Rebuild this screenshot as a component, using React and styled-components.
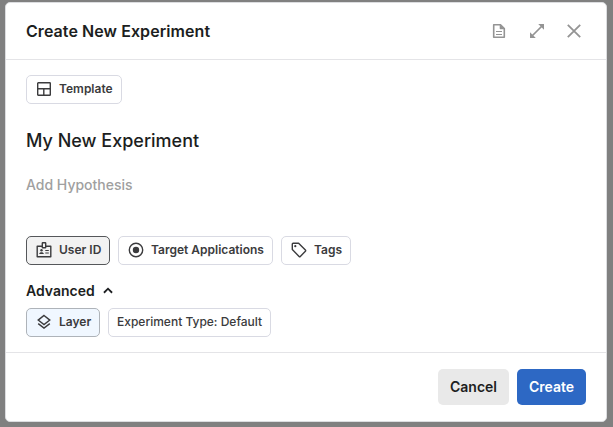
import React from "react";
import styled, { createGlobalStyle } from "styled-components";

const GlobalStyle = createGlobalStyle`
  * { box-sizing: border-box; }
  body { margin: 0; background: #808080; font-family: Inter, "Liberation Sans", sans-serif; }
  button, input { font-family: inherit; }
`;

const Backdrop = styled.div`
  height: 427px;
  padding: 2px 6px 5px 5px;
  background: #808080;
  overflow: hidden;
`;

const Dialog = styled.section`
  height: 420px;
  display: flex;
  flex-direction: column;
  background: #fff;
  border: 1px solid #dcdde0;
  border-radius: 5px;
`;

const Header = styled.header`
  height: 57px;
  flex: none;
  display: flex;
  align-items: center;
  justify-content: space-between;
  padding: 0 22px 0 20px;
  border-bottom: 1px solid #e4e4e7;
`;

const Title = styled.h1`
  margin: 0;
  font-size: 16px;
  line-height: 24px;
  font-weight: 600;
  letter-spacing: 0.07px;
  color: #1c1e21;
`;

const HeaderActions = styled.div`
  display: flex;
  align-items: center;
  gap: 16px;
`;

const IconButton = styled.button`
  width: ${(p) => p.$width || 22}px;
  height: 22px;
  padding: 0;
  display: flex;
  align-items: center;
  justify-content: center;
  border: 0;
  background: transparent;
  color: #949494;
`;

const Body = styled.div`
  flex: 1;
  display: flex;
  flex-direction: column;
  align-items: flex-start;
  padding: 15px 20px 0;
`;

const NameField = styled.div`
  margin-top: 25px;
  height: 24px;
  font-size: 18px;
  line-height: 24px;
  font-weight: 500;
  color: #1c1e21;
`;

const HypothesisField = styled.div`
  margin-top: 22px;
  height: 20px;
  font-size: 14px;
  line-height: 20px;
  font-weight: 500;
  color: #a0a0a0;
`;

const ChipRow = styled.div`
  display: flex;
  gap: 8px;
  margin-top: ${(p) => p.$top || 0}px;
`;

const tones = {
  plain: { border: "#d9dae3", background: "#fff" },
  selected: { border: "#55575a", background: "#f2f2f2" },
  tinted: { border: "#aeb3b9", background: "#f0f7ff" },
};

const Chip = styled.button`
  width: ${(p) => p.$width}px;
  height: 29px;
  display: flex;
  align-items: center;
  gap: 7px;
  padding: 0 0 1px ${(p) => (p.$textOnly ? 8 : 9)}px;
  border: 1px solid ${(p) => tones[p.$tone || "plain"].border};
  border-radius: 5px;
  background: ${(p) => tones[p.$tone || "plain"].background};
  color: #3b3b3d;
  font-size: 12px;
  line-height: 16px;
  font-weight: ${(p) => (p.$textOnly ? 500 : 600)};
  white-space: nowrap;

  svg { flex: none; }
`;

const AdvancedToggle = styled.button`
  display: flex;
  align-items: center;
  gap: 8px;
  height: 20px;
  margin: 16px 0 7px;
  padding: 0;
  border: 0;
  background: transparent;
  color: #1c1e21;
  font-size: 14px;
  line-height: 20px;
  font-weight: 600;
`;

const Footer = styled.footer`
  height: 69px;
  flex: none;
  display: flex;
  align-items: flex-start;
  justify-content: flex-end;
  gap: 8px;
  padding: 16px 20px 0;
  border-top: 1px solid #e4e4e7;
`;

const ActionButton = styled.button`
  width: ${(p) => (p.$primary ? 69 : 71)}px;
  height: 36px;
  padding: 0 0 2px;
  border: 0;
  border-radius: 5px;
  background: ${(p) => (p.$primary ? "#2d68c4" : "#e9e9e9")};
  color: ${(p) => (p.$primary ? "#fff" : "#1c1e21")};
  font-size: 14px;
  font-weight: 600;
`;

const Icon = ({ size = 16, children, ...rest }) => (
  <svg width={size} height={size} viewBox="0 0 16 16" fill="none" stroke="currentColor" strokeWidth="1.4" {...rest}>
    {children}
  </svg>
);

const DocumentIcon = () => (
  <Icon>
    <path d="M2.7 1.7h6.8l3.8 3.8v8.8H2.7z" strokeWidth="1.6" strokeLinejoin="round" />
    <path d="M9 1.5v4.4h4.4z" fill="currentColor" strokeWidth="0.6" />
    <path d="M5 8.5h6M5 11.5h6" strokeWidth="1.2" />
  </Icon>
);

const ExpandIcon = () => (
  <Icon>
    <path d="M3 13 13 3" strokeWidth="1.7" />
    <path d="M9.2 1H15v5.8zM1 9.2V15h5.8z" fill="currentColor" stroke="none" />
  </Icon>
);

const CloseIcon = () => (
  <Icon>
    <path d="M1.8 1.8 14.2 14.2M14.2 1.8 1.8 14.2" strokeWidth="1.8" />
  </Icon>
);

const TemplateIcon = () => (
  <Icon>
    <rect x="1.7" y="1.7" width="12.6" height="12.6" rx="0.6" />
    <path d="M1.7 7.8h12.6M7.8 7.8v6.5" />
  </Icon>
);

const BadgeIcon = () => (
  <Icon>
    <path d="M6 4.2H1.2v10.5h13.6V4.2H10" strokeLinejoin="round" />
    <rect x="6.3" y="0.8" width="3.4" height="5" rx="0.5" />
    <circle cx="5.5" cy="8.3" r="1.2" fill="currentColor" stroke="none" />
    <path d="M3.2 12c0-2.2 4.6-2.2 4.6 0z" fill="currentColor" stroke="none" />
    <path d="M9.3 8.5h3.5M9.3 11h3.5" strokeWidth="1" />
  </Icon>
);

const TargetIcon = () => (
  <Icon>
    <circle cx="8" cy="8" r="6.7" />
    <circle cx="8" cy="8" r="2.5" fill="currentColor" strokeWidth="1.4" />
  </Icon>
);

const TagIcon = () => (
  <Icon>
    <path d="M1.3 2.1q0-.8.8-.8h5.5l6.8 6.8q.6.6 0 1.2l-5.1 5.1q-.6.6-1.2 0L1.3 7.6z" strokeLinejoin="round" />
    <circle cx="4.3" cy="4.2" r="1.1" fill="currentColor" stroke="none" />
  </Icon>
);

const LayersIcon = () => (
  <Icon>
    <path d="m8 1.5 5.8 4.6L8 10.6 2.2 6.1zM2.2 9.6 8 14.1l5.8-4.5" />
  </Icon>
);

const ChevronUp = () => (
  <Icon size={10}>
    <path d="m1.5 10.8 6.5-6.5 6.5 6.5" strokeWidth="2.9" />
  </Icon>
);

export default function App() {
  return (
    <>
      <GlobalStyle />
      <Backdrop>
        <Dialog role="dialog" aria-label="Create New Experiment">
          <Header>
            <Title>Create New Experiment</Title>
            <HeaderActions>
              <IconButton aria-label="Notes"><DocumentIcon /></IconButton>
              <IconButton aria-label="Expand"><ExpandIcon /></IconButton>
              <IconButton aria-label="Close" $width={20}><CloseIcon /></IconButton>
            </HeaderActions>
          </Header>
          <Body>
            <Chip $width={96}><TemplateIcon />Template</Chip>
            <NameField>My New Experiment</NameField>
            <HypothesisField>Add Hypothesis</HypothesisField>
            <ChipRow $top={41}>
              <Chip $width={84} $tone="selected"><BadgeIcon />User ID</Chip>
              <Chip $width={155}><TargetIcon />Target Applications</Chip>
              <Chip $width={70}><TagIcon />Tags</Chip>
            </ChipRow>
            <AdvancedToggle>Advanced<ChevronUp /></AdvancedToggle>
            <ChipRow>
              <Chip $width={74} $tone="tinted"><LayersIcon />Layer</Chip>
              <Chip $width={163} $textOnly>Experiment Type: Default</Chip>
            </ChipRow>
          </Body>
          <Footer>
            <ActionButton>Cancel</ActionButton>
            <ActionButton $primary>Create</ActionButton>
          </Footer>
        </Dialog>
      </Backdrop>
    </>
  );
}
